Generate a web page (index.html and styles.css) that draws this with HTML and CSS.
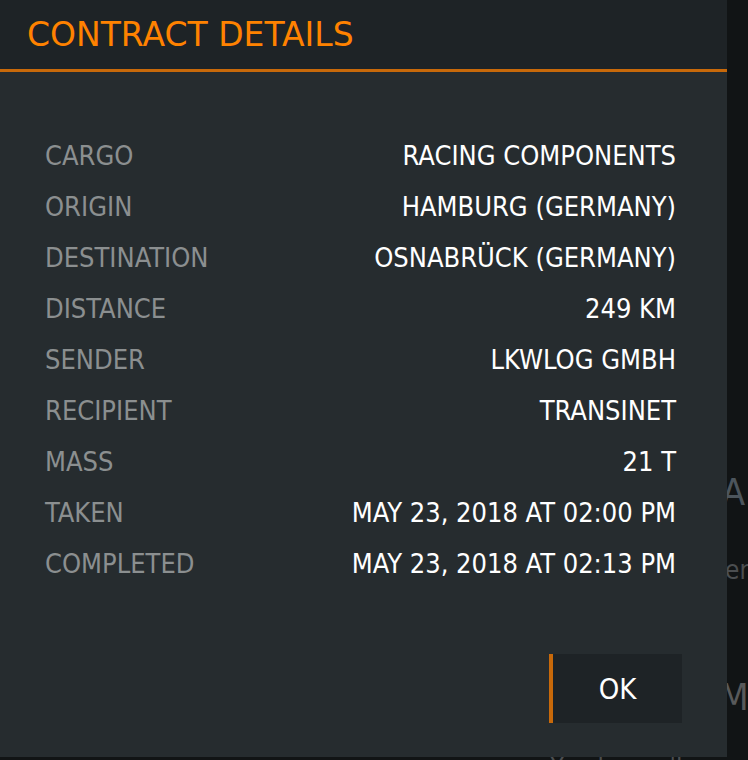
FILE: index.html
```html
<!DOCTYPE html>
<html lang="en">
<head>
    <meta charset="UTF-8">
    <title>Contract Details</title>
    <link rel="stylesheet" href="styles.css">
</head>
<body>
    <main class="page">
        <section class="block">
            <h2 class="team">YOUR TEAM</h2>
            <p class="note">Nobody has been hired yet</p>
        </section>
        <section class="block">
            <h2 class="resume">MY RESUME</h2>
            <p class="note last">You haven't completed any contracts yet</p>
        </section>
    </main>

    <div class="modal">
        <div class="modal-header">
            <h1>CONTRACT DETAILS</h1>
        </div>
        <div class="modal-body">
            <dl class="details">
                <div class="row"><dt>CARGO</dt><dd>RACING COMPONENTS</dd></div>
                <div class="row"><dt>ORIGIN</dt><dd>HAMBURG (GERMANY)</dd></div>
                <div class="row"><dt>DESTINATION</dt><dd>OSNABRÜCK (GERMANY)</dd></div>
                <div class="row"><dt>DISTANCE</dt><dd>249 KM</dd></div>
                <div class="row"><dt>SENDER</dt><dd>LKWLOG GMBH</dd></div>
                <div class="row"><dt>RECIPIENT</dt><dd>TRANSINET</dd></div>
                <div class="row"><dt>MASS</dt><dd>21 T</dd></div>
                <div class="row"><dt>TAKEN</dt><dd>MAY 23, 2018 AT 02:00 PM</dd></div>
                <div class="row"><dt>COMPLETED</dt><dd>MAY 23, 2018 AT 02:13 PM</dd></div>
            </dl>
            <div class="actions">
                <button class="btn">OK</button>
            </div>
        </div>
    </div>
</body>
</html>
```

FILE: styles.css
```css
body {
    margin: 0;
    height: 760px;
    overflow: hidden;
    background: #111415;
    font-family: "DejaVu Sans Condensed", "DejaVu Sans", sans-serif;
    font-stretch: condensed;
}

/* page behind the dialog */
.page {
    padding: 470px 0 0 550px;
    white-space: nowrap;
}

.block h2 {
    margin: 0;
    font-size: 38px;
    line-height: 44px;
    font-weight: normal;
}

.block .team {
    margin-left: 24px;
    color: #4c555c;
}

.block .resume {
    margin-top: 90px;
    margin-left: 16px;
    color: #58595a;
}

.note {
    margin: 41px 0 0;
    font-size: 26px;
    line-height: 30px;
    color: #4b4e50;
}

.note.last {
    margin-top: 33px;
}

/* dialog */
.modal {
    position: absolute;
    top: 0;
    left: 0;
    width: 727px;
    height: 757px;
    background: #262c2f;
    display: flex;
    flex-direction: column;
}

.modal-header {
    height: 69px;
    background: #1e2326;
    border-bottom: 3px solid #c8690a;
    display: flex;
    align-items: center;
    padding-left: 27px;
}

.modal-header h1 {
    margin: 0;
    font-family: "DejaVu Sans", sans-serif;
    font-stretch: normal;
    font-size: 33px;
    font-weight: normal;
    color: #ff8200;
}

.modal-body {
    flex: 1;
    padding: 58px 51px 0 45px;
    display: flex;
    flex-direction: column;
}

.details {
    margin: 0;
}

.row {
    display: flex;
    justify-content: space-between;
    height: 51px;
    align-items: center;
    font-size: 27px;
}

.row dt {
    color: #8b8f90;
}

.row dd {
    margin: 0;
    color: #ffffff;
}

.actions {
    display: flex;
    justify-content: flex-end;
    margin-top: 65px;
    margin-right: -6px;
}

.btn {
    width: 133px;
    height: 69px;
    background: #1e2326;
    border: none;
    border-left: 4px solid #c8690a;
    color: #ffffff;
    font-family: inherit;
    font-stretch: condensed;
    font-size: 29px;
    padding: 0;
}
```
